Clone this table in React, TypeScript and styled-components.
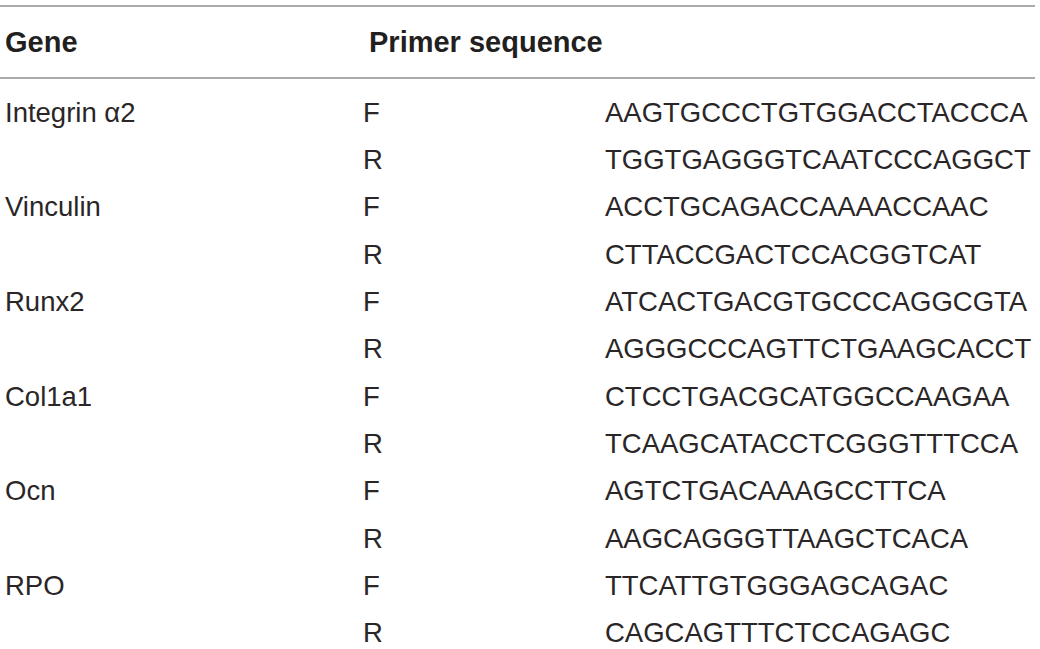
import React from "react";
import styled, { createGlobalStyle } from "styled-components";

const Global = createGlobalStyle`
  html, body { margin: 0; padding: 0; background: #ffffff; }
  body { font-family: "Liberation Sans", Arial, sans-serif; }
`;

const Table = styled.div`
  width: 1035px;
  margin-top: 5px;
  border-top: 2px solid #ababab;
  color: #231f20;
`;

const HeaderRow = styled.div`
  display: grid;
  grid-template-columns: 364px 1fr;
  height: 70px;
  align-items: center;
  border-bottom: 2px solid #ababab;
  padding-left: 5px;
  font-size: 29px;
  font-weight: 700;
`;

const HeaderCell = styled.div`
  line-height: 1;
`;

const Body = styled.div`
  padding-top: 10px;
`;

const Row = styled.div`
  display: grid;
  grid-template-columns: 358px 242px 1fr;
  height: 47.3px;
  align-items: center;
  padding-left: 5px;
  font-size: 27.5px;
  font-weight: 400;
  color: #2a2627;
`;

const Cell = styled.div`
  line-height: 1;
  white-space: nowrap;
`;

const data: [string, string, string][] = [
  ["Integrin α2", "F", "AAGTGCCCTGTGGACCTACCCA"],
  ["", "R", "TGGTGAGGGTCAATCCCAGGCT"],
  ["Vinculin", "F", "ACCTGCAGACCAAAACCAAC"],
  ["", "R", "CTTACCGACTCCACGGTCAT"],
  ["Runx2", "F", "ATCACTGACGTGCCCAGGCGTA"],
  ["", "R", "AGGGCCCAGTTCTGAAGCACCT"],
  ["Col1a1", "F", "CTCCTGACGCATGGCCAAGAA"],
  ["", "R", "TCAAGCATACCTCGGGTTTCCA"],
  ["Ocn", "F", "AGTCTGACAAAGCCTTCA"],
  ["", "R", "AAGCAGGGTTAAGCTCACA"],
  ["RPO", "F", "TTCATTGTGGGAGCAGAC"],
  ["", "R", "CAGCAGTTTCTCCAGAGC"],
];

export default function App() {
  return (
    <>
      <Global />
      <Table>
        <HeaderRow>
          <HeaderCell>Gene</HeaderCell>
          <HeaderCell>Primer sequence</HeaderCell>
        </HeaderRow>
        <Body>
          {data.map(([g, d, s], i) => (
            <Row key={i}>
              <Cell>{g}</Cell>
              <Cell>{d}</Cell>
              <Cell>{s}</Cell>
            </Row>
          ))}
        </Body>
      </Table>
    </>
  );
}
